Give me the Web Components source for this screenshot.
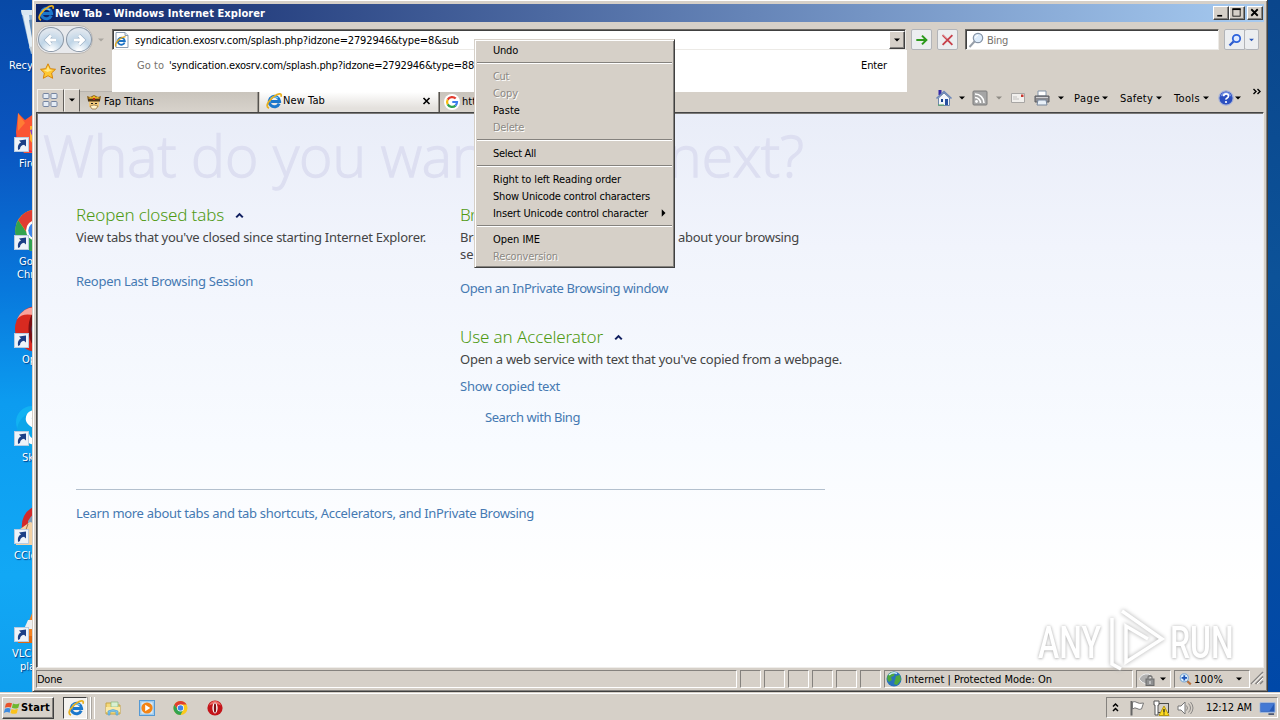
<!DOCTYPE html>
<html lang="en">
<head>
<meta charset="utf-8">
<title>New Tab - Windows Internet Explorer</title>
<style>
html,body{margin:0;width:1280px;height:720px;overflow:hidden}
body{font:11px/17px "DejaVu Sans Condensed","DejaVu Sans",sans-serif;font-stretch:condensed;color:#000}
</style>
</head>
<body>
<desk-top></desk-top>
<script>
const define = (name, css, html, extra) => customElements.define(name, class extends HTMLElement {
  connectedCallback() {
    if (this.shadowRoot) return;
    this.attachShadow({mode: 'open'}).innerHTML = `<style>*{box-sizing:border-box}:host{box-sizing:border-box;display:block}${css}</style>` + (typeof html === 'function' ? html(this) : html);
    if (extra) extra(this);
  }
});

/* Text run that spreads its letters to a fixed width. */
define('fit-text', ':host{white-space:nowrap;flex:none}span{display:inline-block;white-space:pre}', '<span><slot></slot></span>', el => {
  const w = +el.getAttribute('w');
  if (!w) return;
  el.style.width = w + 'px';
  const n = el.textContent.length, s = el.shadowRoot.querySelector('span');
  s.style.letterSpacing = ((w - s.getBoundingClientRect().width) / n).toFixed(3) + 'px';
});

const ART = {
  ie: '<path d="M13.200 10.600A5.200 5.200 0 1 1 13.600 8.400H5" fill="none" stroke="#1c78cc" stroke-width="3"/><path d="M4.500 5.500Q8 2.400 12 5" fill="none" stroke="#7fd0f6" stroke-width="1.300"/><path d="M3 15.200C-2 13.500 4 5 11 1.500c3.400-1.500 5-.5 4 2.300" fill="none" stroke="#e8b020" stroke-width="1.800"/>',
  iepage: '<path d="M2 .5h9l3 3v12H2z" fill="#fff" stroke="#8b9db2"/><path d="M11 .5v3h3" fill="#dde6ef" stroke="#8b9db2"/><path d="M10.600 10.500A3.500 3.500 0 1 1 10.800 9H4" fill="none" stroke="#1c72c4" stroke-width="1.900"/><path d="M2 14.500C0 12 5 5.500 11.500 4.600" fill="none" stroke="#e0a820" stroke-width="1.300"/>',
  star: '<path d="M8 .8l2.300 4.900 5.200.6-3.900 3.700 1.100 5.300L8 12.700l-4.700 2.600 1.100-5.300L.5 6.300l5.200-.6z" fill="#ffc830" stroke="#d8860c"/><path d="M8 3l1.500 3.600 3 .5-5 2-4-2 3-.4z" fill="#ffe98c"/>',
  quad: '<g fill="#e4ebf4" stroke="#7584a0"><rect x="1" y="1.500" width="6" height="5" rx="1"/><rect x="9" y="1.500" width="6" height="5" rx="1"/><rect x="1" y="9.500" width="6" height="5" rx="1"/><rect x="9" y="9.500" width="6" height="5" rx="1"/></g>',
  titan: '<path d="M1 2l3 1 4-2 4 2 3-1-1 5H2z" fill="#8b6420"/><rect x="3" y="5" width="10" height="9" rx="3" fill="#efc77a"/><path d="M2 5h12v2.500H2z" fill="#4b3518"/><path d="M3 4.500h10l-1-2-2 1-2-2-2 2-2-1z" fill="#f0b81f"/><rect x="7" y="4" width="2" height="2" fill="#c02020"/><path d="M5 9.500h2M9 9.500h2" stroke="#222"/><path d="M4 12q4-2 8 0l-2 3H6z" fill="#fff3cc" stroke="#80551c" stroke-width=".6"/>',
  google: '<circle cx="8" cy="8" r="8" fill="#fff"/><g fill="none" stroke-width="2.200"><path d="M11.700 4.600A5 5 0 0 0 3.700 5.600" stroke="#e33b2e"/><path d="M3.700 5.600a5 5 0 0 0 0 4.800" stroke="#f6b90c"/><path d="M3.700 10.400a5 5 0 0 0 7.800 1.200" stroke="#30a350"/><path d="M11.500 11.600A5 5 0 0 0 13 8H8.300" stroke="#3f7fee"/></g>',
  home: '<path d="M2.500 0h3v5h-3z" fill="#3428a8"/><path d="M2.500 8v7.500h11V8L8 3z" fill="#f2f5fa" stroke="#6d86ad"/><path d="M.5 8.500L8 1.500l7.500 7" fill="none" stroke="#6a86b8" stroke-width="1.600"/><path d="M5 9h2v3H5z" fill="#16408c"/><path d="M9 9h3v6H9z" fill="#2850a0"/><path d="M2 15h6" stroke="#59a95a"/>',
  feed: '<rect x="1" y="1" width="14" height="14" rx="1" fill="#a5a5a5" stroke="#7c7c7c"/><circle cx="4.500" cy="11.500" r="1.400" fill="#fff"/><path d="M3 7.500a5.500 5.500 0 0 1 5.500 5.500M3 4a9 9 0 0 1 9 9" stroke="#fff" fill="none" stroke-width="1.600"/>',
  mail: '<path d="M1.500 3.500h13v9h-13z" fill="#f2f0ed" stroke="#a8a6a4"/><path d="M3 7h4M3 9h6" stroke="#c4c2c0"/><rect x="11" y="4.500" width="2.500" height="2.500" fill="#c83830"/>',
  print: '<path d="M4 1h8v5H4z" fill="#fff" stroke="#8394a8"/><path d="M1 6h14v6H1z" fill="#8c8c90" stroke="#5b5d62"/><path d="M2 7.500h12" stroke="#d0d0d4"/><path d="M4 10h8l1 5H3z" fill="#e8f0f8" stroke="#77869b"/>',
  help: '<circle cx="8" cy="8" r="7.200" fill="#2b4fc0" stroke="#a8b3d8" stroke-width="1.200"/><path d="M2.500 6.500a5.600 5.600 0 0 1 11 0q-5-3-11 0" fill="#7893e4"/><path d="M5.600 6.200q.2-2.300 2.500-2.300T10.500 6q0 1.200-1.300 1.900T8 9.600" fill="none" stroke="#fff" stroke-width="1.700"/><circle cx="8" cy="12" r="1.100" fill="#fff"/>',
  lens: '<path d="M6.500 9.500L1.500 15" stroke="#98a0aa" stroke-width="2"/><circle cx="10" cy="6" r="4.700" fill="#dcebfa" stroke="#8694a6" stroke-width="1.200"/><path d="M7.500 6q0-2.500 2.500-2.700" stroke="#fff" fill="none"/>',
  search: '<path d="M6.500 9.500L2.500 13.500" stroke="#2f5ccc" stroke-width="2.300"/><circle cx="9.500" cy="6.500" r="3.700" fill="#dfeaff" stroke="#2e63dc" stroke-width="1.800"/>',
  go: '<path d="M1.500 8h11M8 3l5 5-5 5" fill="none" stroke="#2c9a1c" stroke-width="2.300"/>',
  stop: '<path d="M2 2l12 12M14 2L2 14" stroke="#c8424c" stroke-width="2.300"/><path d="M2 1.500l5 5" stroke="#e89298"/>',
  down: '<path d="M5 6.500h6L8 9.500z" fill="currentColor"/>',
  right: '<path d="M5 3v10l5-5z" fill="currentColor"/>',
  up: '<path d="M4.500 10L8 6.500l3.500 3.500" fill="none" stroke="#101f60" stroke-width="2.200"/>',
  globe: '<circle cx="8" cy="8" r="7.500" fill="#2872bd"/><path d="M2 4Q5 0 9 1L8 5 5 6 6 9 3 11Q0 8 2 4M10 5l4-1 1 5-4 5-3-1 1-4z" fill="#4fa83f"/><path d="M3 4q4-3.500 8-1.500" fill="none" stroke="#cdeaff" stroke-width="1.400"/>',
  shield: '<path d="M0 8Q3 2 10 3l3 3-4 2-2 5Q3 12 0 8" fill="#b0b0b0" stroke="#eee"/><rect x="7" y="8" width="8" height="6.500" fill="#8f9091" stroke="#6a6a6a"/><path d="M9 8V6q2-2.500 4 0v2" fill="none" stroke="#777" stroke-width="1.300"/><path d="M11 10v3" stroke="#eee"/>',
  zoom: '<path d="M9 9l5.500 5" stroke="#b8703c" stroke-width="2.600"/><circle cx="6.500" cy="6" r="5" fill="#dceefc" stroke="#6d9ed0" stroke-width="1.200"/><path d="M3.200 6h6.600M6.500 2.700v6.600" stroke="#1b55b8" stroke-width="2.200"/>',
  grip: '<path d="M14 2L2 14M14 6.500L6.500 14M14 11l-3 3" stroke="#858280" stroke-width="1.500"/><path d="M14 3.500L3.500 14M14 8l-6 6" stroke="#fff"/>',
  win: '<path d="M1 3.500Q4 1.500 7.500 3L6.300 7.500Q3.500 6-.2 7.800z" fill="#e8522b"/><path d="M8.500 3.300Q12 5 15.500 3L14.200 7.600Q11 9.500 7.300 7.800z" fill="#6db82e"/><path d="M0 8.900Q3.200 7.300 6 8.700L4.900 13Q2 11.500-1.300 13.300z" fill="#3d8be0"/><path d="M7 9Q10 10.600 13.800 8.900L12.600 13.500Q9 15 5.900 13.300z" fill="#fbc21c"/>',
  folder: '<path d="M1 3h5l1 2h8v9H1z" fill="#f4d878" stroke="#c7a546"/><path d="M6 2h7v5H6z" fill="#d9f0d2" stroke="#86b87c" stroke-width=".7"/><path d="M1 7h14v5H1z" fill="#fbe9a5"/><path d="M3 15v-4q5-3 10 0v4h-2v-3q-3-1-6 0v3z" fill="#7ec4ec" stroke="#4b9cca" stroke-width=".6"/>',
  media: '<rect x=".5" y=".5" width="15" height="15" fill="#a9d2f2" stroke="#5599d4"/><rect x="2" y="2" width="12" height="12" fill="#dcecf8" stroke="#84b8e0" stroke-width=".5"/><circle cx="8" cy="8" r="5.600" fill="#f48414"/><path d="M6.200 4.800v6.400L11.200 8z" fill="#fff"/>',
  chrome: '<circle cx="8" cy="8" r="7.500" fill="#fbc91c"/><path d="M1.500 4.250A7.500 7.500 0 0 0 8 15.500L11 9.500 5 9.500z" fill="#32a350"/><path d="M1.500 4.250A7.500 7.500 0 0 1 14.500 4.250H8L4.800 9z" fill="#e03c31"/><circle cx="8" cy="8" r="3.700" fill="#fff"/><circle cx="8" cy="8" r="2.900" fill="#3e85e8"/>',
  opera: '<circle cx="8" cy="8" r="7.600" fill="#c4141a"/><path d="M2 5.500Q4 1 8 1t6 4.500Q8 2 2 5.500" fill="#ec6a66"/><ellipse cx="8" cy="8" rx="2.600" ry="5.400" fill="#fff"/><ellipse cx="8" cy="8" rx="1.200" ry="4.800" fill="#7c1016"/>',
  flag: '<path d="M2.500 1v14.500" stroke="#666" stroke-width="2"/><path d="M3.500 2Q6 1 8 2.500t6.500.5L12.500 9Q10 10 8 8.500T3.500 9z" fill="#fff" stroke="#777"/>',
  net: '<rect x="4.500" y="3.500" width="11" height="9" fill="#d2cec8" stroke="#4a4a48"/><path d="M1 1h5v4H5v10H2V5H1z" fill="#fff" stroke="#555"/><path d="M11 6l5 9.500H6z" fill="#ffdc1e" stroke="#b79811"/><path d="M11 9v3.500M11 13.500v1" stroke="#222" stroke-width="1.300"/>',
  sound: '<path d="M1 6h3l4-4v12l-4-4H1z" fill="#fff" stroke="#777"/><path d="M9.500 5.500q2 2.500 0 5M11.500 3.500q4 4.500 0 9M13.500 2q5 6 0 12" fill="none" stroke="#8a8886"/>',
  show: '<path d="M0 2.500h16v10H0z" fill="#2458b4" stroke="#99b8e4"/><path d="M1 3.500h14l-5 8H1z" fill="#4379d4"/><path d="M9 14.500h6" stroke="#283a60" stroke-width="1.500"/>',
  chev2: '<path d="M5.500 6.500L8 4l2.500 2.500M5.500 11L8 8.500l2.500 2.500" fill="none" stroke="#000" stroke-width="1.500"/>',
  more: '<path d="M4.500 5l2.500 2.500L4.500 10M8.500 5L11 7.500 8.500 10" fill="none" stroke="#000" stroke-width="1.400"/>',
  x: '<path d="M4 4l8 8M12 4l-8 8" stroke="#000" stroke-width="2.200"/>',
  min: '<path d="M4 12h6" stroke="#000" stroke-width="2"/>',
  max: '<rect x="3.500" y="3.500" width="9" height="9" fill="none" stroke="#000"/><path d="M3 4h10" stroke="#000" stroke-width="2"/>',
  back: '<path d="M13 8H4M8 3.500L3.500 8 8 12.500" fill="none" stroke="#9bb0c6" stroke-width="4"/><path d="M13 8H4M8 3.500L3.500 8 8 12.500" fill="none" stroke="#fff" stroke-width="2.800"/>',
  fwd: '<path d="M3 8h9M8 3.500l4.500 4.500L8 12.500" fill="none" stroke="#9bb0c6" stroke-width="4"/><path d="M3 8h9M8 3.500l4.500 4.500L8 12.500" fill="none" stroke="#fff" stroke-width="2.800"/>'
};
define('ui-icon', ':host{flex:none;width:16px;height:16px}svg{display:block;width:100%;height:100%;overflow:visible}', el => `<svg viewBox="0 0 16 16">${ART[el.getAttribute('name')]}</svg>`);

/* Desktop shortcuts */
const SHORT = {
  bin: '<path d="M11 2l33-2-5 42-18 3z" fill="#8eb1d3"/><path d="M11 1h35l-1 5H12z" fill="#d9e7f2"/><path d="M13 6l7 34 4 1-5-35z" fill="#e2edf5"/><path d="M19 11l15-2-2 16-10 4z" fill="#5f88b5"/><path d="M19 38l15-2v6l-12 2z" fill="#c4cdd3"/>',
  fox: '<path d="M8 3l7 7 10-7 22 8v32H14Q6 34 6 22z" fill="#fa5434"/><path d="M8 3l7 10-7 8z" fill="#ff7c34"/><path d="M20 16h16v18q-12 4-16-4z" fill="#ffb32c"/><path d="M20 20l12-3v11q-10 3-12-8" fill="#8a3fc2"/><path d="M6 24q4 14 18 18H12Q5 35 6 24" fill="#ec2450"/>',
  chrome: '<g transform="translate(4 0) scale(2.800)">' + ART.chrome + '</g>',
  opera: '<ellipse cx="27" cy="23" rx="22" ry="23" fill="#d82a20"/><path d="M7 13Q14-2 32 2L25 10Q14 6 7 13" fill="#f9a49c"/><ellipse cx="29" cy="23" rx="9" ry="18" fill="#2d5b9b" stroke="#7a1014" stroke-width="3"/>',
  skype: '<circle cx="22" cy="18" r="16" fill="#12b2f2"/><circle cx="26" cy="27" r="19" fill="#0ba6ea"/><path d="M36 11Q21 6 19 13t12 10 1 11-16-4" fill="none" stroke="#fff" stroke-width="6"/>',
  cc: '<path d="M12 28Q10 10 27 3h20v37H12z" fill="#d22a2a"/><path d="M18 19Q23 9 32 11v22H18z" fill="#7d9cba"/><path d="M6 30l14-10 17 5v18H6z" fill="#f4d1a4"/><path d="M7 30q8 4 11-8" fill="none" stroke="#a56f48"/>',
  vlc: '<path d="M27 1h8l10 42H10z" fill="#f58220"/><path d="M18 20h22l3 9H14z" fill="#eee"/><path d="M8 36h39v7H8z" fill="#e26a10"/>'
};
define('desk-icon', ':host{position:absolute;left:-15px;width:90px;color:#fff;font-size:11px;line-height:13px;text-shadow:1px 1px 1px #003a80}.p{height:46px;margin-left:25px}.p>svg{width:48px;height:46px;display:block}.s{position:absolute;left:29px;top:27px;width:15px;height:15px;background:#eef3f9;border:1px solid #b9cbe0}.s svg{display:block}div.t{padding-top:1px;white-space:nowrap}', el =>
  `<div class="p"><svg viewBox="0 0 48 46">${SHORT[el.getAttribute('art')]}</svg></div>${el.hasAttribute('link') ? '<div class="s"><svg width="13" height="13" viewBox="0 0 13 13"><path d="M3 12Q2 6 6 4.500L4 2.500 11 1.500V8.500L9 6.700Q5 7.500 5 11z" fill="#1c3f86"/></svg></div>' : ''}<div class="t"><slot></slot></div>`);

define('title-bar', ':host{display:flex;height:18px;align-items:center;background:linear-gradient(90deg,#0c2469,#a6caf0);color:#fff;font:bold 11px/18px "DejaVu Sans Condensed",sans-serif;padding:0 1px 0 2px}.s{flex:1}.b{width:16px;height:14px;background:#d6d0c8;border:1px solid;border-color:#fff #404040 #404040 #fff;box-shadow:inset -1px -1px #878480;flex:none;color:#000}.b ui-icon{width:13px;height:13px;margin:-1px 0 0 0}.c{margin-left:2px}',
  '<ui-icon name="ie"></ui-icon><fit-text w="210" style="margin-left:1px;padding-top:1px">New Tab - Windows Internet Explorer</fit-text><div class="s"></div><div class="b"><ui-icon name="min"></ui-icon></div><div class="b"><ui-icon name="max"></ui-icon></div><div class="b c"><ui-icon name="x"></ui-icon></div>');

define('nav-bar', `:host{display:flex;height:31px;padding-top:4px;align-items:center}
.nv{display:flex;width:57px;height:29px;background:#e8e9ec;border-radius:14px;margin-left:0;padding:1px;gap:2px;border:1px solid #bbb7b2;flex:none;align-items:center}
.r{width:26px;height:25px;border-radius:50%;background:radial-gradient(circle at 50% 100%,#fff 5%,#bfd5e7 45%,#dfe6ee 80%);border:1px solid #8a97a6;display:flex;align-items:center;justify-content:center;flex:none}
.f{height:21px;background:#fff;border:1px solid;border-color:#6a6864 #eceae6 #eceae6 #6a6864;box-shadow:inset 1px 1px #404040;display:flex;align-items:center;flex:none}
.a{width:794px;padding-left:1px}.a .s{flex:1}.dd{width:16px;height:18px;margin-top:1px;background:#d6d0c8;border:1px solid;border-color:#fff #404040 #404040 #fff;box-shadow:inset -1px -1px #878480}.dd ui-icon{margin-left:-1px}
.k{width:21px;height:21px;background:#eceef0;border:1px solid #b2b4b8;border-radius:2px;display:flex;align-items:center;justify-content:center;flex:none}
.q{width:254px;margin-left:7px;padding-left:2px}fit-text{padding-top:1px}`,
`<div class="nv"><div class="r"><ui-icon name="back"></ui-icon></div><div class="r"><ui-icon name="fwd"></ui-icon></div></div>
<ui-icon name="down" style="color:#aaa69f;margin-left:0"></ui-icon>
<div class="f a" style="margin-left:3px"><ui-icon name="iepage"></ui-icon><fit-text w="324" style="margin-left:5px">syndication.exosrv.com/splash.php?idzone=2792946&amp;type=8&amp;sub</fit-text><div class="s"></div><div class="dd"><ui-icon name="down"></ui-icon></div></div>
<div class="k" style="margin-left:5px"><ui-icon name="go" style="width:14px"></ui-icon></div><div class="k" style="margin-left:5px"><ui-icon name="stop" style="width:13px"></ui-icon></div>
<div class="f q"><ui-icon name="lens"></ui-icon><fit-text w="21" style="margin-left:3px;color:#77736e">Bing</fit-text></div>
<div class="k" style="margin-left:5px;border-radius:2px 0 0 2px"><ui-icon name="search"></ui-icon></div><div class="k" style="width:14px;border-left:0"><ui-icon name="down" style="width:13px;color:#2b57b8"></ui-icon></div>`);

define('fav-bar', ':host{display:flex;align-items:center;height:36px;padding:0 0 1px 4px}', '<ui-icon name="star"></ui-icon><fit-text w="46" style="margin-left:4px">Favorites</fit-text>');

define('tab-item', ':host{display:flex;align-items:center;height:21px;border-right:1px solid #55524e;border-top:1px solid #b8b4ae;box-shadow:inset -1px 0 #9a9690;background:linear-gradient(#c9c4bc,#d8d3cc);padding:0 5px 2px 6px;flex:none}:host([on]){background:linear-gradient(#fff,#e4e1dd 80%);border-color:#f5f3f0 #55524e;padding-bottom:4px}',
  el => `<ui-icon name="${el.getAttribute('icon')}" style="margin:1px 1px 0 0"></ui-icon><slot></slot>${el.hasAttribute('on') ? '<ui-icon name="x" style="margin:2px 0 0 auto;width:15px;height:12px"></ui-icon>' : ''}`);

define('tab-strip', `:host{display:flex;align-items:flex-end;height:23px}
.q{display:flex;align-items:center;height:23px;width:27px;border:1px solid;border-color:#f4f2ee #625f5b transparent #f4f2ee;padding:0 0 2px 4px;flex:none}
.d{width:16px;padding:0 0 2px}.d ui-icon{margin-left:-1px}`,
`<div class="q" style="margin-left:1px"><ui-icon name="quad"></ui-icon></div><div class="q d"><ui-icon name="down"></ui-icon></div>
<tab-item icon="titan" style="width:179px"><fit-text w="50" style="margin-left:1px">Fap Titans</fit-text></tab-item>
<tab-item on icon="ie" style="width:180px;margin-left:1px"><fit-text w="42">New Tab</fit-text></tab-item>
<tab-item icon="google" style="width:180px;padding-left:4px"><fit-text style="margin-left:1px">htt</fit-text></tab-item>
<command-bar style="margin-left:auto"></command-bar>`);

define('command-bar', ':host{display:flex;align-items:center;width:330px;height:28px}',
`<ui-icon name="home" style="margin-left:2px;height:18px"></ui-icon><ui-icon name="down" style="margin-left:2px"></ui-icon>
<ui-icon name="feed" style="margin-left:2px"></ui-icon><ui-icon name="down" style="margin-left:3px;color:#8f8b85"></ui-icon>
<ui-icon name="mail" style="margin-left:3px"></ui-icon><ui-icon name="print" style="margin-left:8px"></ui-icon><ui-icon name="down" style="margin-left:3px"></ui-icon>
<fit-text w="26" style="margin-left:5px">Page</fit-text><ui-icon name="down" style="margin-left:-3px"></ui-icon>
<fit-text w="33" style="margin-left:7px">Safety</fit-text><ui-icon name="down" style="margin-left:-2px"></ui-icon>
<fit-text w="26" style="margin-left:7px">Tools</fit-text><ui-icon name="down" style="margin-left:-2px"></ui-icon>
<ui-icon name="help" style="margin-left:4px"></ui-icon><ui-icon name="down" style="margin-left:-4px"></ui-icon><ui-icon name="more" style="margin:-12px 0 0 3px"></ui-icon>`);

define('suggest-list', ':host{position:absolute;left:80px;top:50px;width:795px;height:42px;background:#fff}div{display:flex;padding:7px 20px 0 25px;height:24px}.s{flex:1}',
  '<div><fit-text w="27" style="color:#77736e">Go to</fit-text><fit-text w="305" style="margin-left:5px">\'syndication.exosrv.com/splash.php?idzone=2792946&amp;type=88</fit-text><span class="s"></span><fit-text w="26">Enter</fit-text></div>');

define('page-section', ':host{font:13px/17px "Noto Sans",sans-serif;color:#444}.h{display:flex;align-items:center;height:23px;color:#4f9a12;font:300 17px/23px "Noto Sans",sans-serif}.h ui-icon{margin-left:8px;width:15px;height:15px;margin-top:2px}',
  el => `<div class="h"><fit-text w="${el.getAttribute('hw')}">${el.getAttribute('head')}</fit-text>${el.hasAttribute('plain') ? '' : '<ui-icon name="up"></ui-icon>'}</div><slot></slot>`);
define('page-link', ':host{color:#4579b2;line-height:17px}', '<slot></slot>');

define('page-view', `:host{flex:1;min-height:0;border:1px solid;border-color:#444 #efedea #efedea #444;box-shadow:inset 1px 1px #7b7a78;background:linear-gradient(#e9edf8,#f1f4fc 24%,#f8fbff 60%,#fff 85%);overflow:hidden;font:13px/17px "Noto Sans",sans-serif}
h1{margin:0;padding:7px 0 0 6px;height:90px;color:#dddff1;font:300 57px/70px "Open Sans","Noto Sans",sans-serif;-webkit-text-stroke:1.3px #dddff1}
.c{display:grid;grid-template-columns:384px 1fr;padding:0 0 0 39px;height:286px}
.row{display:flex;margin-top:3px}
.f{width:749px;margin-left:39px;border-top:1px solid #b3c0ce;padding-top:15px}`,
`<h1><fit-text w="761">What do you want to do next?</fit-text></h1>
<div class="c"><page-section head="Reopen closed tabs" hw="148"><fit-text w="350" style="margin-top:3px">View tabs that you've closed since starting Internet Explorer.</fit-text><page-link style="margin-top:27px"><fit-text w="177">Reopen Last Browsing Session</fit-text></page-link></page-section>
<div><page-section plain head="Br" hw="16"><div class="row"><fit-text w="21">Bro</fit-text><fit-text w="121" style="margin-left:197px">about your browsing</fit-text></div><fit-text>se</fit-text><page-link style="margin-top:17px"><fit-text w="208">Open an InPrivate Browsing window</fit-text></page-link></page-section>
<page-section head="Use an Accelerator" hw="143" style="margin-top:28px"><fit-text w="382" style="margin-top:3px">Open a web service with text that you've copied from a webpage.</fit-text><page-link style="margin-top:10px"><fit-text w="100">Show copied text</fit-text></page-link><page-link style="margin:14px 0 0 25px"><fit-text w="95">Search with Bing</fit-text></page-link></page-section></div></div>
<div class="f"><page-link><fit-text w="458">Learn more about tabs and tab shortcuts, Accelerators, and InPrivate Browsing</fit-text></page-link></div>`);

define('status-bar', ':host{display:flex;height:20px;gap:3px;padding-top:2px}div{border:1px solid;border-color:#85827e #fff #fff #85827e;height:18px;display:flex;align-items:center;flex:none}',
  `<div style="width:701px"><fit-text w="25">Done</fit-text></div>${'<div style="width:21px"></div>'.repeat(6)}<div style="width:249px;padding-left:1px"><ui-icon name="globe"></ui-icon><fit-text w="147" style="margin-left:3px">Internet | Protected Mode: On</fit-text></div><div style="width:35px;padding-left:2px"><ui-icon name="shield"></ui-icon><ui-icon name="down"></ui-icon></div><div style="width:76px;padding-left:4px"><ui-icon name="zoom" style="width:13px;height:13px"></ui-icon><fit-text w="29" style="margin-left:2px">100%</fit-text><ui-icon name="down" style="margin-left:8px"></ui-icon></div><ui-icon name="grip" style="margin-left:-4px"></ui-icon>`);

define('browser-window', ':host{position:absolute;left:32px;top:-1px;width:1236px;height:693px;background:#d6d0c8;border:1px solid;border-color:#d6d0c8 #404040 #404040 #d6d0c8;box-shadow:inset 1px 1px #fff,inset -1px -1px #85827e;padding:4px 3px 3px;display:flex;flex-direction:column}.over{position:absolute;left:-1px;top:0}',
  '<title-bar></title-bar><nav-bar></nav-bar><fav-bar></fav-bar><tab-strip></tab-strip><page-view></page-view><status-bar></status-bar><div class="over"><suggest-list></suggest-list></div>');

define('menu-item', ':host{height:17px;padding-left:16px;display:flex;align-items:center}:host([off]){color:#8c8984;text-shadow:1px 1px #fff}', el => `<fit-text w="${el.getAttribute('w')}">${el.getAttribute('label')}</fit-text>${el.hasAttribute('sub') ? '<ui-icon name="right" style="margin:-1px 2px 0 auto;width:12px;height:12px"></ui-icon>' : ''}`);
define('menu-line', ':host{height:9px;padding-top:3px}div{height:2px;border-top:1px solid #85827e;border-bottom:1px solid #fff}', '<div></div>');
define('context-menu', ':host{position:absolute;left:474px;top:39px;width:201px;height:229px;background:#d6d0c8;border:1px solid;border-color:#d6d0c8 #404040 #404040 #d6d0c8;box-shadow:inset 1px 1px #fff,inset -1px -1px #85827e;padding:2px}',
`<menu-item label="Undo" w="25"></menu-item><menu-line></menu-line><menu-item off label="Cut" w="16"></menu-item><menu-item off label="Copy" w="25"></menu-item><menu-item label="Paste" w="27"></menu-item><menu-item off label="Delete" w="31"></menu-item><menu-line></menu-line><menu-item label="Select All" w="43"></menu-item><menu-line></menu-line><menu-item label="Right to left Reading order" w="128"></menu-item><menu-item label="Show Unicode control characters" w="157"></menu-item><menu-item sub label="Insert Unicode control character" w="155"></menu-item><menu-line></menu-line><menu-item label="Open IME" w="47"></menu-item><menu-item off label="Reconversion" w="65"></menu-item>`);

define('task-bar', `:host{position:absolute;left:0;top:692px;width:1280px;height:28px;background:#d6d0c8;border-top:1px solid #d6d0c8;box-shadow:inset 0 1px #fff;display:flex;align-items:center;padding:2px 2px 0}
.st{width:52px;height:22px;border:1px solid;border-color:#fff #404040 #404040 #fff;box-shadow:inset -1px -1px #85827e;font-weight:bold;display:flex;align-items:center;padding-left:2px;flex:none}
.on{width:24px;height:22px;margin-left:9px;border:1px solid;border-color:#404040 #fff #fff #404040;background:#f4f2ef;display:flex;align-items:center;padding-left:4px;flex:none}.g{width:4px;height:22px;border-right:1px solid #fff;border-left:1px solid #aaa6a0;flex:none}
.tray{margin-left:auto;width:172px;height:21px;border:1px solid;border-color:#85827e #fff #fff #85827e;display:flex;align-items:center;flex:none}`,
`<div class="st"><ui-icon name="win" style="width:15px"></ui-icon><fit-text w="29" style="margin-left:1px">Start</fit-text></div><div class="on"><ui-icon name="ie"></ui-icon></div><div class="g"></div><div class="g"></div>
<ui-icon name="folder" style="margin-left:10px"></ui-icon><ui-icon name="media" style="margin-left:18px"></ui-icon><ui-icon name="chrome" style="margin-left:18px;width:15px"></ui-icon><ui-icon name="opera" style="margin-left:19px"></ui-icon>
<div class="tray"><ui-icon name="chev2" style="width:17px"></ui-icon><ui-icon name="flag" style="margin-left:5px"></ui-icon><ui-icon name="net" style="margin-left:8px"></ui-icon><ui-icon name="sound" style="margin-left:8px"></ui-icon><fit-text w="46" style="margin-left:13px">12:12 AM</fit-text><ui-icon name="show" style="margin-left:8px;width:15px"></ui-icon></div>`);

define('water-mark', ':host{position:absolute;left:1038px;top:606px;width:196px;height:70px;display:flex;align-items:center;color:#fff;font:500 45px/60px Roboto,sans-serif;text-shadow:0 0 4px #bbb,0 1px 3px #ccc}.w{width:64px;transform-origin:0 50%;transform:scaleX(.71);white-space:nowrap;margin-top:3px}svg{width:62px;height:66px;overflow:visible;margin:0 3px;flex:none}.w,svg{flex:none}',
  '<div class="w">ANY</div><svg viewBox="0 0 62 66" fill="none" stroke="#fff" stroke-width="3.500" style="filter:drop-shadow(0 0 2px #aaa)"><path d="M17 3l40 28-36 23V18l22 13M7 10v46l9 5"/></svg><div class="w">RUN</div>');

define('desk-top', ':host{position:relative;width:1280px;height:720px;overflow:hidden;background:linear-gradient(#0849a6,#0a55c0 20%,#0878dc 40%,#0c9cf0 56%,#12a8f5 80%,#0e9cec)}.ed{position:absolute;left:1268px;top:0;width:12px;height:692px;background:linear-gradient(#0a468c,#0c5298 40%,#0048a8)}',
`<desk-icon art="bin" style="top:9px"><fit-text style="padding-left:24px;margin-top:3px">Recycle Bin</fit-text></desk-icon>
<desk-icon art="fox" link style="top:110px"><fit-text style="padding-left:34px">Firefox</fit-text></desk-icon>
<desk-icon art="chrome" link style="top:208px"><fit-text style="padding-left:34px">Google</fit-text><fit-text style="padding-left:32px">Chrome</fit-text></desk-icon>
<desk-icon art="opera" link style="top:306px"><fit-text style="padding-left:37px">Opera</fit-text></desk-icon>
<desk-icon art="skype" link style="top:404px"><fit-text style="padding-left:37px">Skype</fit-text></desk-icon>
<desk-icon art="cc" link style="top:502px"><fit-text style="padding-left:29px">CCleaner</fit-text></desk-icon>
<desk-icon art="vlc" link style="top:600px"><fit-text style="padding-left:27px">VLC media</fit-text><fit-text style="padding-left:35px">player</fit-text></desk-icon>
<div class="ed"></div><browser-window></browser-window><context-menu></context-menu><task-bar></task-bar><water-mark></water-mark>`);
</script>
</body>
</html>
